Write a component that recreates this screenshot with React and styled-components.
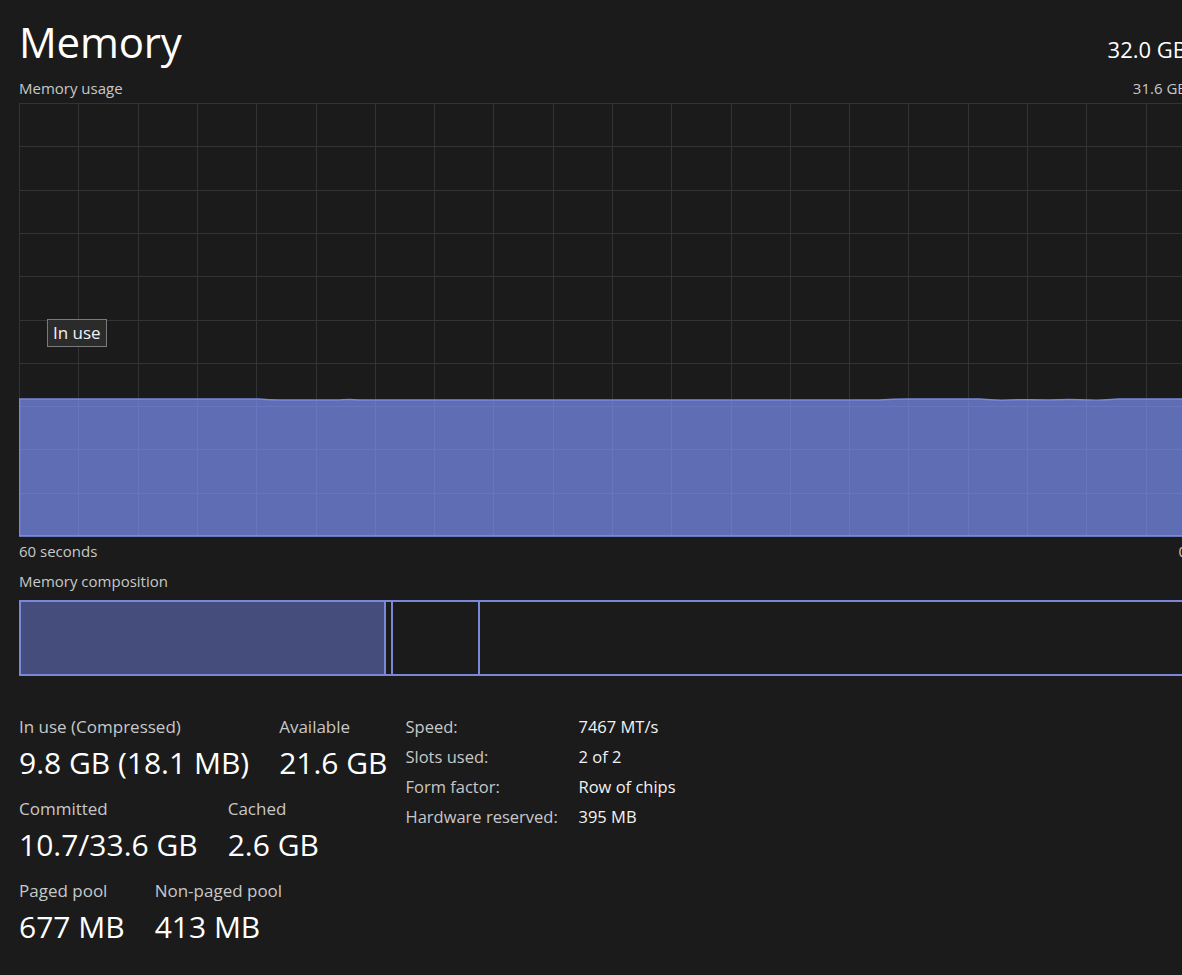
import React from "react";
import styled, { createGlobalStyle } from "styled-components";

const Global = createGlobalStyle`
  html, body { margin: 0; padding: 0; background: #1b1b1b; overflow: hidden; }
  body { font-family: "Open Sans", "Noto Sans", sans-serif; color: #fff; }
`;

const Page = styled.div`
  width: 1168px;
  padding: 14px 0 0 19px;
  display: flex;
  flex-direction: column;
`;

const Row = styled.div`
  display: flex;
  justify-content: space-between;
  align-items: baseline;
  margin-top: ${(p) => p.$mt || 0}px;
`;

const Title = styled.h1`
  margin: 0;
  font-weight: 400;
  font-size: 42px;
  line-height: 56px;
  letter-spacing: -0.2px;
`;

const Total = styled.span`
  font-size: 22px;
`;

const Caption = styled.span`
  font-size: 15px;
  line-height: 20px;
  color: #c8c8c8;
`;

const GraphWrap = styled.div`
  position: relative;
  width: 1168px;
  height: 434px;
  margin-top: 5px;
`;

const Graph = styled.svg`
  display: block;
`;

const Legend = styled.div`
  position: absolute;
  left: 28px;
  top: 216px;
  padding: 0 5px;
  border: 1px solid #7a7a7a;
  background: #2b2b2b;
  font-size: 17px;
  line-height: 26px;
  color: #f2f2f2;
`;

const Section = styled.div`
  margin-top: ${(p) => p.$mt || 0}px;
  display: flex;
`;

const Composition = styled.div`
  display: flex;
  height: 76px;
  margin-top: 9px;
  border: 2px solid #7b88d9;
  box-sizing: border-box;
  width: 1180px;
`;

const Segment = styled.div`
  width: ${(p) => (p.$w ? p.$w + "px" : "auto")};
  flex: ${(p) => (p.$w ? "none" : "1")};
  background: ${(p) => p.$bg || "transparent"};
  border-right: ${(p) => (p.$last ? "none" : "2px solid #7b88d9")};
`;

const Stats = styled.div`
  display: flex;
  gap: 18px;
  margin-top: 39px;
`;

const StatColumn = styled.div`
  display: flex;
  flex-direction: column;
  gap: 14px;
`;

const StatRow = styled.div`
  display: flex;
  gap: 30px;
`;

const Stat = styled.div`
  display: flex;
  flex-direction: column;
`;

const StatLabel = styled.span`
  font-size: 17px;
  line-height: 24px;
  color: #c8c8c8;
`;

const StatValue = styled.span`
  font-size: 30px;
  line-height: 40px;
  margin-top: 4px;
  color: #fff;
  white-space: nowrap;
`;

const Specs = styled.div`
  display: grid;
  grid-template-columns: 173px auto;
  grid-auto-rows: 24px;
  row-gap: 6px;
  font-size: 16.5px;
  line-height: 24px;
  align-content: start;
`;

const SpecKey = styled.span`
  color: #c8c8c8;
  white-space: nowrap;
`;

const SpecVal = styled.span`
  color: #f2f2f2;
  white-space: nowrap;
`;

function UsageGraph() {
  const W = 1168;
  const H = 433;
  const vlines = [];
  for (let x = 0; x <= W; x += 59.3) vlines.push(Math.round(x) + 0.5);
  const hlines = [];
  for (let i = 0; i <= 10; i++) hlines.push(Math.round(i * 43.3) + 0.5);
  const top = 296;
  const wave = `M0 ${top} L240 ${top} Q250 ${top + 1} 260 ${top + 1} L320 ${top + 1} Q330 ${top} 340 ${top + 1} L860 ${top + 1} Q880 ${top - 0.5} 900 ${top} L960 ${top} Q975 ${top + 1.5} 990 ${top + 1} Q1010 ${top + 0.5} 1030 ${top + 1} Q1050 ${top} 1070 ${top + 1} Q1085 ${top + 1.5} 1100 ${top} L${W} ${top}`;
  return (
    <Graph width={W} height={H + 1} viewBox={`0 0 ${W} ${H + 1}`}>
      {hlines.map((y) => (
        <line key={"h" + y} x1="0" x2={W} y1={y} y2={y} stroke="#333" strokeWidth="1" />
      ))}
      {vlines.map((x) => (
        <line key={"v" + x} x1={x} x2={x} y1="0" y2={H} stroke="#333" strokeWidth="1" />
      ))}
      <path d={`${wave} L${W} ${H} L0 ${H} Z`} fill="#5f6db5" />
      {hlines.filter((y) => y > top).map((y) => (
        <line key={"hf" + y} x1="0" x2={W} y1={y} y2={y} stroke="#6976bd" strokeWidth="1" />
      ))}
      {vlines.map((x) => (
        <line key={"vf" + x} x1={x} x2={x} y1={top + 2} y2={H} stroke="#6976bd" strokeWidth="1" />
      ))}
      <path d={wave} fill="none" stroke="#7b89dc" strokeWidth="1.5" />
      <line x1="0.5" x2="0.5" y1={top} y2={H} stroke="#7b89dc" strokeWidth="1.5" />
      <line x1="0" x2={W} y1={H - 0.5} y2={H - 0.5} stroke="#7b89dc" strokeWidth="1" />
    </Graph>
  );
}

const stats = [
  [
    ["In use (Compressed)", "9.8 GB (18.1 MB)"],
    ["Available", "21.6 GB"],
  ],
  [
    ["Committed", "10.7/33.6 GB"],
    ["Cached", "2.6 GB"],
  ],
  [
    ["Paged pool", "677 MB"],
    ["Non-paged pool", "413 MB"],
  ],
];

const specs = [
  ["Speed:", "7467 MT/s"],
  ["Slots used:", "2 of 2"],
  ["Form factor:", "Row of chips"],
  ["Hardware reserved:", "395 MB"],
];

export default function App() {
  return (
    <>
      <Global />
      <Page>
        <Row>
          <Title>Memory</Title>
          <Total>32.0 GB</Total>
        </Row>
        <Row $mt={8}>
          <Caption>Memory usage</Caption>
          <Caption>31.6 GB</Caption>
        </Row>
        <GraphWrap>
          <UsageGraph />
          <Legend>In use</Legend>
        </GraphWrap>
        <Row $mt={4}>
          <Caption>60 seconds</Caption>
          <Caption>0</Caption>
        </Row>
        <Section $mt={10}>
          <Caption>Memory composition</Caption>
        </Section>
        <Composition>
          <Segment $w={363} $bg="#454d7c" />
          <Segment $w={5} />
          <Segment $w={85} />
          <Segment $last />
        </Composition>
        <Stats>
          <StatColumn>
            {stats.map((row, i) => (
              <StatRow key={i}>
                {row.map(([l, v]) => (
                  <Stat key={l}>
                    <StatLabel>{l}</StatLabel>
                    <StatValue>{v}</StatValue>
                  </Stat>
                ))}
              </StatRow>
            ))}
          </StatColumn>
          <Specs>
            {specs.map(([k, v]) => (
              <React.Fragment key={k}>
                <SpecKey>{k}</SpecKey>
                <SpecVal>{v}</SpecVal>
              </React.Fragment>
            ))}
          </Specs>
        </Stats>
      </Page>
    </>
  );
}
